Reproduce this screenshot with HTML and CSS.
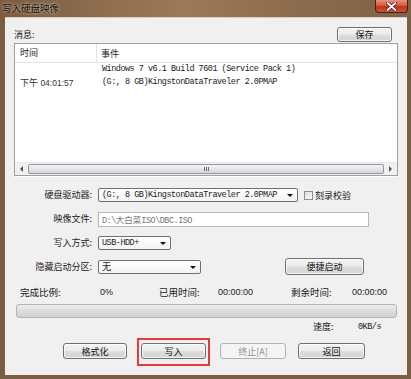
FILE: index.html
```html
<!DOCTYPE html>
<html lang="zh-CN">
<head>
    <meta charset="UTF-8">
    <meta name="viewport" content="width=device-width, initial-scale=1.0">
    <title>写入硬盘映像</title>
    <link rel="stylesheet" href="styles.css">
</head>
<body>
    <div class="window">
        <div class="titlebar">
            <span class="title">写入硬盘映像</span>
            <span class="close">
                <svg width="11" height="9" viewBox="0 0 11 9">
                    <path d="M1.5 1 L9.5 8 M9.5 1 L1.5 8" stroke="#3a1a14" stroke-width="3.2" stroke-linecap="round"/>
                    <path d="M1.5 1 L9.5 8 M9.5 1 L1.5 8" stroke="#ffffff" stroke-width="1.8" stroke-linecap="round"/>
                </svg>
            </span>
        </div>
        <div class="frame">
            <div class="client">
                <div class="msg-head">
                    <span class="cjk">消息:</span>
                    <button class="btn save">保存</button>
                </div>

                <div class="log">
                    <div class="log-head">
                        <div class="col-time cjk">时间</div>
                        <div class="col-event cjk">事件</div>
                    </div>
                    <div class="log-row">
                        <div class="col-time time"><span class="cjk">下午</span> 04:01:57</div>
                        <div class="col-event mono">Windows 7 v6.1 Build 7601 (Service Pack 1)<br>(G:, 8 GB)KingstonDataTraveler 2.0PMAP</div>
                    </div>
                    <div class="log-fill"></div>
                    <div class="hscroll">
                        <span class="arr arr-left"></span>
                        <span class="thumb"><span class="grip"></span></span>
                        <span class="arr arr-right"></span>
                    </div>
                </div>

                <div class="form">
                    <label class="cjk">硬盘驱动器:</label>
                    <div class="field">
                        <div class="combo combo-drive">
                            <span class="mono">(G:, 8 GB)KingstonDataTraveler 2.0PMAP</span>
                            <span class="arrow"></span>
                        </div>
                        <span class="check"></span>
                        <span class="cjk">刻录校验</span>
                    </div>

                    <label class="cjk">映像文件:</label>
                    <div class="field">
                        <div class="textbox"><span class="mono">D:\</span><span class="cjk">大白菜</span><span class="mono">ISO\DBC.ISO</span></div>
                    </div>

                    <label class="cjk">写入方式:</label>
                    <div class="field">
                        <div class="combo combo-mode">
                            <span class="mono">USB-HDD+</span>
                            <span class="arrow"></span>
                        </div>
                    </div>

                    <label class="cjk">隐藏启动分区:</label>
                    <div class="field">
                        <div class="combo combo-hide">
                            <span class="cjk">无</span>
                            <span class="arrow"></span>
                        </div>
                        <button class="btn quick">便捷启动</button>
                    </div>
                </div>

                <div class="stats">
                    <span class="cjk">完成比例:</span>
                    <span class="num">0%</span>
                    <span class="cjk">已用时间:</span>
                    <span class="num">00:00:00</span>
                    <span class="cjk">剩余时间:</span>
                    <span class="num">00:00:00</span>
                </div>

                <div class="progress"></div>

                <div class="speed">
                    <span class="cjk speed-label">速度:</span>
                    <span class="mono">0KB/s</span>
                </div>

                <div class="actions">
                    <button class="btn act">格式化</button>
                    <button class="btn act act-write">写入</button>
                    <button class="btn act" disabled>终止[A]</button>
                    <button class="btn act act-back">返回</button>
                </div>
            </div>
        </div>
    </div>
</body>
</html>
```

FILE: styles.css
```css
body {
    margin: 0;
    width: 411px;
    height: 379px;
    overflow: hidden;
    font-family: "Noto Sans CJK SC", sans-serif;
    font-size: 9px;
    color: #1a1a1a;
}

.cjk {
    font-family: "Noto Sans CJK SC", sans-serif;
    font-size: 9px;
}

.mono {
    font-family: "Liberation Mono", monospace;
    font-size: 8.5px;
    letter-spacing: -0.5px;
}

.window {
    width: 411px;
    height: 379px;
    display: flex;
    flex-direction: column;
    background: #7b5d42;
}

/* title bar */
.titlebar {
    height: 17px;
    display: flex;
    justify-content: space-between;
    align-items: flex-start;
    background: linear-gradient(90deg, #7a5b3f 0%, #8e6e4f 25%, #9a7a58 45%, #8d6d4e 70%, #7f6146 100%);
}

.title {
    margin: 2px 0 0 2px;
    font-size: 9.5px;
    line-height: 12px;
    color: #111;
    text-shadow: 0 0 4px rgba(255, 240, 220, 0.6), 0 0 2px rgba(255, 240, 220, 0.5);
}

.close {
    width: 33px;
    height: 13px;
    margin-right: 3px;
    box-sizing: border-box;
    border: 1px solid #4e1e16;
    border-top: none;
    border-radius: 0 0 4px 4px;
    background: linear-gradient(#e8907c 0%, #d65a42 45%, #c0321a 55%, #d0503a 100%);
    display: flex;
    align-items: center;
    justify-content: center;
}

.frame {
    flex: 1;
    padding: 0 4px 4px 5px;
    display: flex;
}

.client {
    flex: 1;
    background: #f0f0f0;
    box-shadow: inset 0 1px 0 #d8cfc6;
    display: flex;
    flex-direction: column;
}

/* buttons */
.btn {
    box-sizing: border-box;
    height: 16px;
    padding: 0;
    border: 1px solid #707070;
    border-radius: 3px;
    background: linear-gradient(#f4f4f4 0%, #ebebeb 48%, #dddddd 52%, #d3d3d3 100%);
    box-shadow: inset 0 0 0 1px rgba(255, 255, 255, 0.7);
    font-family: "Noto Sans CJK SC", sans-serif;
    font-size: 9px;
    line-height: 13px;
    color: #111;
}

.btn:disabled {
    border-color: #adb2b5;
    background: #f4f4f4;
    color: #8f8f8f;
    box-shadow: none;
}

.msg-head {
    margin-top: 10px;
    padding: 0 15px 0 9px;
    height: 15px;
    display: flex;
    justify-content: space-between;
    align-items: center;
}

.save {
    width: 55px;
    height: 15px;
}

/* message list */
.log {
    margin: 1px 9px 0 9px;
    height: 133px;
    box-sizing: border-box;
    border: 1px solid #a0a0a0;
    background: #fff;
    display: flex;
    flex-direction: column;
    box-shadow: 0 1px 0 #fff;
}

.log-head {
    height: 18px;
    display: flex;
    align-items: center;
    border-bottom: 1px solid #e3e3e3;
}

.col-time {
    width: 82px;
    box-sizing: border-box;
    padding-left: 5px;
    flex-shrink: 0;
}

.log-head .col-time {
    height: 18px;
    line-height: 18px;
    border-right: 1px solid #e3e3e3;
}

.col-event {
    padding-left: 5px;
}

.log-head .col-event {
    padding-left: 4px;
}

.log-row {
    display: flex;
    line-height: 13px;
}

.time {
    padding-top: 13px;
    font-family: "Liberation Sans", sans-serif;
    font-size: 8.5px;
    color: #333;
}

.log-fill {
    flex: 1;
}

.hscroll {
    height: 12px;
    display: flex;
    align-items: center;
    background: #f0f0f0;
    border-top: 1px solid #e8e8e8;
}

.arr {
    width: 13px;
    display: flex;
    justify-content: center;
}

.arr-left::before,
.arr-right::before {
    content: "";
    border-top: 3px solid transparent;
    border-bottom: 3px solid transparent;
}

.arr-left::before {
    border-right: 3px solid #555;
}

.arr-right::before {
    border-left: 3px solid #555;
}

.thumb {
    flex: 1;
    height: 10px;
    box-sizing: border-box;
    border: 1px solid #979797;
    border-radius: 2px;
    background: linear-gradient(#f3f4f6 0%, #e3e5e9 50%, #d3d6dc 100%);
    display: flex;
    align-items: center;
    justify-content: center;
}

.grip {
    width: 5px;
    height: 4px;
    background: repeating-linear-gradient(90deg, #6b6f77 0 1px, transparent 1px 2px);
}

/* form rows */
.form {
    margin-top: 12px;
    display: grid;
    grid-template-columns: 87px 1fr;
    column-gap: 6px;
    row-gap: 10px;
    align-items: center;
}

.form label {
    text-align: right;
    line-height: 14px;
    color: #222;
}

.field {
    display: flex;
    align-items: center;
    height: 14px;
}

.combo {
    box-sizing: border-box;
    height: 14px;
    border: 1px solid #707070;
    border-radius: 2px;
    background: linear-gradient(#ffffff, #f2f2f2);
    display: flex;
    align-items: center;
    justify-content: space-between;
    padding: 0 4px 0 3px;
    line-height: 12px;
}

.arrow {
    border-left: 3px solid transparent;
    border-right: 3px solid transparent;
    border-top: 3px solid #111;
}

.combo-drive {
    width: 200px;
}

.combo-mode {
    width: 73px;
}

.combo-hide {
    width: 103px;
}

.check {
    width: 9px;
    height: 9px;
    box-sizing: border-box;
    margin: 0 2px 0 6px;
    border: 1px solid #8e8f8f;
    background: linear-gradient(135deg, #dcdcdc, #fbfbfb);
}

.textbox {
    width: 271px;
    height: 15px;
    box-sizing: border-box;
    border: 1px solid #b9b9b9;
    background: #fff;
    padding-left: 3px;
    line-height: 13px;
    color: #777;
}

.textbox .cjk {
    font-size: 8.5px;
}

.quick {
    width: 79px;
    height: 17px;
    margin: -2px 0 -1px 84px;
}

/* progress */
.stats {
    margin-top: 12px;
    padding-left: 15px;
    height: 12px;
    line-height: 12px;
    display: grid;
    grid-template-columns: 80px 59px 59px 73px 61px 1fr;
}

.stats .cjk {
    font-size: 9.5px;
}

.num {
    font-family: "Liberation Sans", sans-serif;
    font-size: 9px;
    color: #222;
}

.progress {
    margin: 6px 10px 0 11px;
    height: 14px;
    box-sizing: border-box;
    border: 1px solid #b4b4b4;
    border-radius: 3px;
    background: linear-gradient(#eeeeee 0%, #dcdcdc 50%, #d2d2d2 100%);
}

.speed {
    margin-top: 3px;
    height: 12px;
    line-height: 12px;
    display: flex;
    padding-left: 308px;
}

.speed-label {
    width: 45px;
}

.actions {
    margin-top: 10px;
    display: flex;
    padding-left: 58px;
}

.act {
    width: 64px;
    margin-right: 14px;
}

.act-write {
    width: 65px;
    position: relative;
}

/* red highlight frame drawn over the write button */
.act-write::after {
    content: "";
    position: absolute;
    top: -6px;
    left: -5px;
    right: -5px;
    bottom: -8px;
    border: 2px solid #e63b3b;
}

.act:disabled {
    width: 66px;
    margin-right: 12px;
}

.act-back {
    width: 67px;
}
```
